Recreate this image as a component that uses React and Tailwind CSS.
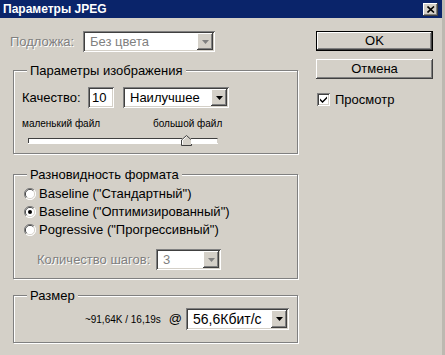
import React from "react";

const raised =
  "shadow-[inset_-1px_-1px_0_#404040,inset_1px_1px_0_#ffffff,inset_-2px_-2px_0_#808080,inset_2px_2px_0_#d4d0c8]";
const sunken =
  "shadow-[inset_1px_1px_0_#808080,inset_-1px_-1px_0_#ffffff,inset_2px_2px_0_#404040,inset_-2px_-2px_0_#d4d0c8]";
const disabledText = "text-[#808080] [text-shadow:1px_1px_0_#ffffff]";

function Arrow({ disabled }) {
  return (
    <div className={`w-[16px] h-full bg-[#d4d0c8] flex items-center justify-center ${raised}`}>
      <svg width="7" height="4" viewBox="0 0 7 4">
        <path d="M0 0H7L3.5 4Z" fill={disabled ? "#808080" : "#000"} />
      </svg>
    </div>
  );
}

function Combo({ value, width, height = 21, disabled, big }) {
  return (
    <div className={`flex bg-white p-[2px] ${sunken}`} style={{ width, height }}>
      <div
        className={`flex-1 flex items-center pl-[5px] whitespace-nowrap ${big ? "text-[14px]" : "text-[13px]"} ${
          disabled ? "text-[#808080]" : "text-black"
        }`}
      >
        {value}
      </div>
      <Arrow disabled={disabled} />
    </div>
  );
}

function Group({ title, children, className = "" }) {
  return (
    <fieldset
      className={`ml-[3px] w-[285px] border border-[#808080] shadow-[inset_1px_1px_0_#ffffff,1px_1px_0_#ffffff] ${className}`}
    >
      <legend className="ml-[13px] px-[3px] bg-[#d4d0c8] leading-[15px]">{title}</legend>
      {children}
    </fieldset>
  );
}

function Radio({ checked, label }) {
  return (
    <div className="h-[18px] flex items-center gap-[3px]">
      <svg width="12" height="12" viewBox="0 0 12 12">
        <circle cx="6" cy="6" r="5.5" fill="#ffffff" />
        <path d="M10 2A5.5 5.5 0 0 0 2 10" stroke="#808080" fill="none" />
        <path d="M9.3 2.7A4.5 4.5 0 0 0 2.7 9.3" stroke="#404040" fill="none" />
        <path d="M2 10A5.5 5.5 0 0 0 10 2" stroke="#ffffff" fill="none" />
        <path d="M2.7 9.3A4.5 4.5 0 0 0 9.3 2.7" stroke="#d4d0c8" fill="none" />
        {checked && <circle cx="6" cy="6" r="2" fill="#000" />}
      </svg>
      <span>{label}</span>
    </div>
  );
}

function Slider() {
  return (
    <div className="flex items-center ml-[6px] mt-[5px] h-[11px] w-[190px]">
      <div className="w-[154px] h-[5px] bg-white border-t border-l border-[#404040] shadow-[0_1px_0_#ffffff]" />
      <svg className="shrink-0 -mx-[1px]" width="11" height="11" viewBox="0 0 11 11">
        <path d="M0.5 10.5V5L5.5 0.5L10.5 5V10.5Z" fill="#d4d0c8" stroke="#404040" />
        <path d="M1.5 9.5V5.4L5.5 1.8" fill="none" stroke="#ffffff" />
      </svg>
      <div className="flex-1 h-[5px] bg-white border-t border-r border-[#404040] border-r-[#d4d0c8] shadow-[0_1px_0_#ffffff]" />
    </div>
  );
}

export default function App() {
  return (
    <div className="w-[445px] h-[355px] overflow-hidden bg-[#d4d0c8] flex flex-col font-['Liberation_Sans',Arial,sans-serif] text-[13px] text-black border-r-[3px] border-[#bdb9b1]">
      <div className="h-[18px] shrink-0 bg-[#0a246a] flex items-center justify-between pl-[3px] pr-[4px]">
        <span className="text-white font-bold text-[12px] leading-none">Параметры JPEG</span>
        <div className={`w-[15px] h-[13px] bg-[#d4d0c8] flex items-center justify-center ${raised}`}>
          <svg width="8" height="7" viewBox="0 0 8 7">
            <path d="M0.5 0.5L7 6.5M7 0.5L0.5 6.5" stroke="#000" strokeWidth="1.6" />
          </svg>
        </div>
      </div>

      <div className="flex pt-[13px]">
        <div className="w-[298px] pl-[10px] flex flex-col">
          <div className="flex items-center h-[21px]">
            <span className={`w-[73px] ${disabledText}`}>Подложка:</span>
            <Combo value="Без цвета" width={132} disabled />
          </div>

          <Group title="Параметры изображения" className="mt-[11px] h-[91px]">
            <div className="px-[8px] pt-[9px]">
              <div className="flex items-center h-[21px]">
                <span className="w-[66px]">Качество:</span>
                <div className={`w-[26px] h-[21px] bg-white flex items-center pl-[4px] text-[13px] ${sunken}`}>10</div>
                <div className="ml-[9px]">
                  <Combo value="Наилучшее" width={106} />
                </div>
              </div>
              <div className="flex text-[10px] mt-[8px] h-[14px] items-center">
                <span className="w-[131px]">маленький файл</span>
                <span>большой файл</span>
              </div>
              <Slider />
            </div>
          </Group>

          <Group title="Разновидность формата" className="mt-[13px] h-[112px]">
            <div className="pl-[10px] pt-[3px]">
              <Radio label='Baseline ("Стандартный")' />
              <Radio checked label='Baseline ("Оптимизированный")' />
              <Radio label='Pogressive ("Прогрессивный")' />
              <div className="flex items-center mt-[10px] pl-[13px]">
                <span className={`w-[119px] ${disabledText}`}>Количество шагов:</span>
                <Combo value="3" width={65} height={21} disabled />
              </div>
            </div>
          </Group>

          <Group title="Размер" className="mt-[9px] h-[55px]">
            <div className="flex items-center justify-end pr-[8px] pt-[5px]">
              <span className="text-[10px]">~91,64K / 16,19s</span>
              <span className="ml-[8px] mr-[4px] text-[13px]">@</span>
              <Combo value="56,6Кбит/с" width={103} height={22} big />
            </div>
          </Group>
        </div>

        <div className="ml-[18px] w-[117px] flex flex-col">
          <button className="h-[20px] border border-black bg-[#d4d0c8] p-0">
            <div className={`h-full flex items-center justify-center ${raised}`}>OK</div>
          </button>
          <button className={`mt-[8px] h-[20px] bg-[#d4d0c8] flex items-center justify-center ${raised}`}>
            Отмена
          </button>
          <div className="mt-[11px] ml-[1px] flex items-center gap-[5px]">
            <div className={`w-[13px] h-[13px] bg-white flex items-center justify-center ${sunken}`}>
              <svg width="7" height="7" viewBox="0 0 7 7">
                <path d="M0 2.5L2.5 5L7 0.5V2.5L2.5 7L0 4.5Z" fill="#000" />
              </svg>
            </div>
            <span>Просмотр</span>
          </div>
        </div>
      </div>
    </div>
  );
}
